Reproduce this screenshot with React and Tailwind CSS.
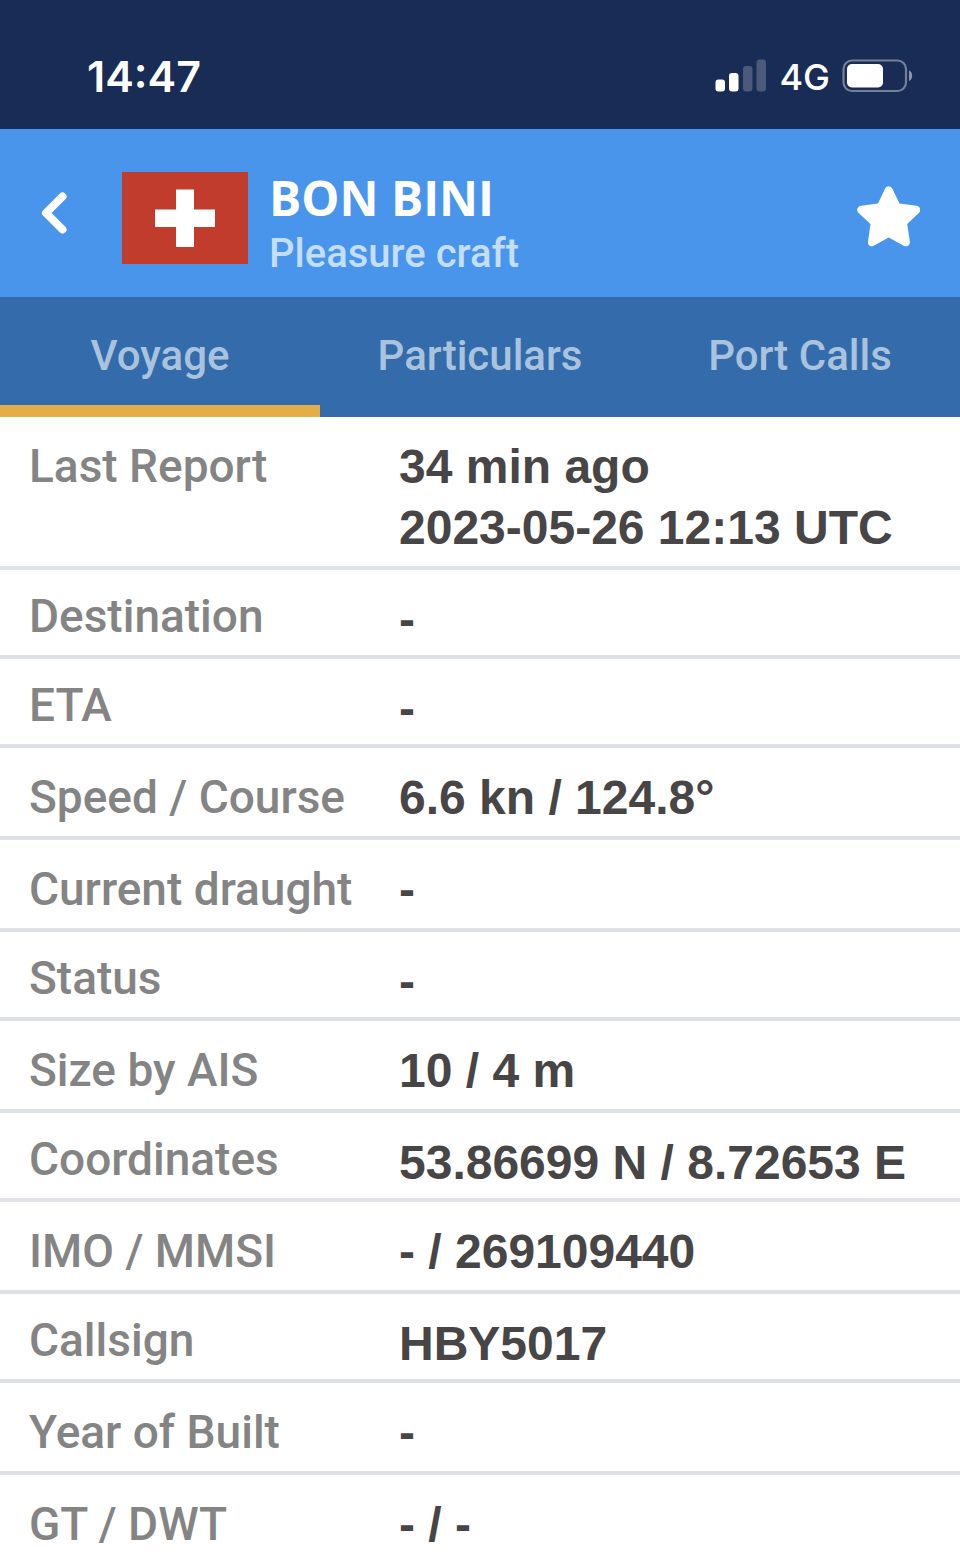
import { useState } from 'react'

const TABS = ['Voyage', 'Particulars', 'Port Calls']

// tall rows get a little more room around the text
const ROWS = [
  { label: 'Last Report', lines: ['34 min ago', '2023-05-26 12:13 UTC'], tall: true },
  { label: 'Destination', lines: ['-'] },
  { label: 'ETA', lines: ['-'] },
  { label: 'Speed / Course', lines: ['6.6 kn / 124.8°'], tall: true },
  { label: 'Current draught', lines: ['-'], tall: true },
  { label: 'Status', lines: ['-'] },
  { label: 'Size by AIS', lines: ['10 / 4 m'], tall: true },
  { label: 'Coordinates', lines: ['53.86699 N / 8.72653 E'] },
  { label: 'IMO / MMSI', lines: ['- / 269109440'], tall: true },
  { label: 'Callsign', lines: ['HBY5017'] },
  { label: 'Year of Built', lines: ['-'], tall: true },
  { label: 'GT / DWT', lines: ['- / -'], tall: true },
]

// ── Icons ─────────────────────────────────────────────────────────────────────
function SignalIcon() {
  return (
    <svg width="52" height="36" viewBox="0 0 52 36" fill="#fff">
      <rect x="0.5" y="20.5" width="9.5" height="12" rx="3" />
      <rect x="14" y="14" width="9.5" height="18.5" rx="3" />
      <rect x="28" y="7" width="9.5" height="25.5" rx="3" opacity="0.22" />
      <rect x="41.5" y="0.5" width="9.5" height="32" rx="3" opacity="0.22" />
    </svg>
  )
}

function BatteryIcon() {
  return (
    <svg width="72" height="36" viewBox="0 0 72 36">
      <rect x="1.5" y="1.5" width="62.5" height="30.5" rx="8.5" fill="none" stroke="#fff" strokeOpacity="0.4" strokeWidth="2.2" />
      <rect x="5" y="5" width="36" height="23.5" rx="5" fill="#fff" />
      <path d="M67 11.5c4.2 1.6 4.2 8.9 0 10.5z" fill="#fff" fillOpacity="0.5" />
    </svg>
  )
}

function BackIcon() {
  return (
    <svg width="28" height="44" viewBox="0 0 28 44" fill="none" stroke="#fff" strokeWidth="8" strokeLinecap="round" strokeLinejoin="round">
      <path d="M22.5 5.5L6 22l16.5 16.5" />
    </svg>
  )
}

function SwissFlag() {
  return (
    <svg width="126" height="92" viewBox="0 0 126 92" role="img" aria-label="Switzerland">
      <rect width="126" height="92" fill="#c23c2d" />
      <path d="M54 17.5h18v20h21v17.5H72v20H54V55H33V37.5h21z" fill="#fff" />
    </svg>
  )
}

function StarIcon() {
  return (
    <svg width="64" height="62" viewBox="0 0 64 62" fill="#fff">
      <path d="M22 17.5L28.9 3C30.3 -0.6 35.1 -0.6 36.5 3L43.5 17.5L60.4 19.8C64.4 20.3 65.4 24.6 62.8 27L51.2 38L53.8 55.5C54.2 59.4 51 61.2 47.8 59.7L32.7 51.5L17.6 59.7C14.4 61.2 11.6 59.4 12 55.5L14.5 38L2.6 27C0 24.6 1 20.3 5 19.8Z" />
    </svg>
  )
}

function StatusBar() {
  return (
    <div className="flex items-center justify-between bg-[#192c56] pt-6 pr-[46px] pl-[87px] h-[129px] text-white font-['Inter',sans-serif]">
      <span className="text-[43px] leading-none font-semibold">14:47</span>
      <div className="flex items-center gap-3">
        <SignalIcon />
        <span className="text-[36px] leading-none font-medium">4G</span>
        <BatteryIcon />
      </div>
    </div>
  )
}

function VesselHeader() {
  return (
    <header className="flex items-center bg-[#4995ec] h-[168px] px-10">
      <button type="button" aria-label="Back" className="shrink-0">
        <BackIcon />
      </button>
      <div className="ml-[54px] mt-2.5 shrink-0">
        <SwissFlag />
      </div>
      <div className="ml-[21px] mt-6 flex-1 min-w-0">
        <h1 className="text-[48px] leading-[58px] font-bold text-white font-['Open_Sans',sans-serif]">BON BINI</h1>
        <p className="text-[40px] leading-[54px] font-medium text-[#c5def7]">Pleasure craft</p>
      </div>
      <button type="button" aria-label="Favourite" className="mt-2 shrink-0">
        <StarIcon />
      </button>
    </header>
  )
}

export default function App() {
  const [tab, setTab] = useState('Voyage')

  return (
    <div className="min-h-screen bg-white font-['Roboto',sans-serif]">
      <StatusBar />
      <VesselHeader />

      <nav className="grid grid-cols-3 h-[120px] bg-[#346bab]">
        {TABS.map((name) => (
          <button
            key={name}
            type="button"
            onClick={() => setTab(name)}
            className={`border-b-12 pt-2 text-[42px] font-medium text-[#a9c3de] ${tab === name ? 'border-[#e5ad46]' : 'border-transparent'}`}
          >
            {name}
          </button>
        ))}
      </nav>

      <table className="w-full border-separate border-spacing-0 text-left leading-[61px]">
        <tbody>
          {ROWS.map(({ label, lines, tall }, i) => {
            const cell = `align-top ${i < ROWS.length - 1 ? 'border-b-4 border-[#dee1e7]' : ''}`
            return (
              <tr key={label}>
                <th scope="row" className={`${cell} ${tall ? 'pt-[19px]' : 'pt-4'} pb-2 w-[399px] pl-[29px] text-[46px] font-medium text-[#848484]`}>
                  {label}
                </th>
                <td className={`${cell} pt-[19px] ${tall ? 'pb-2' : 'pb-[5px]'} text-[48px] font-bold text-[#474546] font-['Liberation_Sans',sans-serif]`}>
                  {lines.map((line) => (
                    <div key={line}>{line}</div>
                  ))}
                </td>
              </tr>
            )
          })}
        </tbody>
      </table>
    </div>
  )
}
